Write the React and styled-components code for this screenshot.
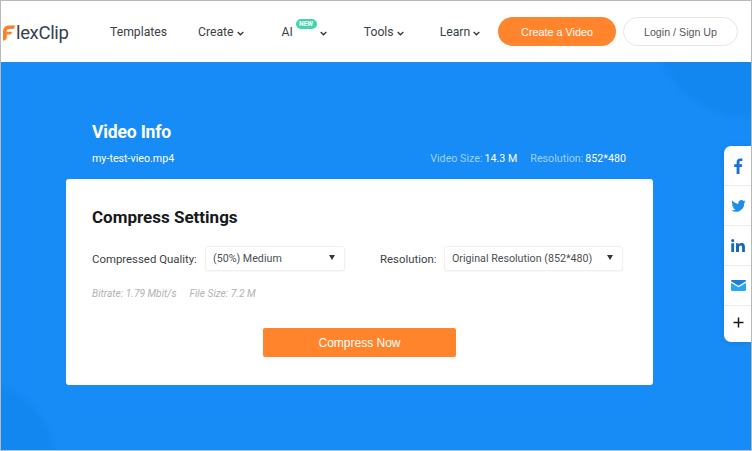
import React from "react";
import styled, { createGlobalStyle } from "styled-components";

const Global = createGlobalStyle`
  html, body { margin: 0; padding: 0; background: #fff; }
  body { font-family: Roboto, "Liberation Sans", sans-serif; }
  * { box-sizing: border-box; }
`;
const Frame = styled.div`
  width: 752px; height: 451px; border: 1px solid #b9b9b9; border-bottom-color: #a9c6de;
  display: flex; flex-direction: column; overflow: hidden; position: relative;
`;
const Header = styled.header`
  height: 61px; flex: none; background: #fff; display: flex; align-items: center; padding: 0 13px 0 0;
`;
const Logo = styled.div`
  width: 109px; flex: none; display: flex; align-items: center; color: #36414c;
  font-size: 18.5px; letter-spacing: -0.35px; padding: 2px 0 0 1px;
  svg { flex: none; }
`;
const Nav = styled.nav`display: flex; align-items: center; flex: 1; height: 100%; padding-top: 1px;`;
const NavItem = styled.span`
  position: relative; display: flex; align-items: center; font-size: 12.2px; color: #3b3f44;
  margin-right: ${(p) => p.$gap}px; height: 20px;
  svg { margin-left: ${(p) => p.$chev || 3}px; margin-top: 3px; }
`;
const NewBadge = styled.span`
  position: absolute; left: 14px; top: -3px; width: 21px; height: 10px; border-radius: 6px;
  background: #43d5ad; color: #fff; font-size: 6.5px; font-weight: 700; line-height: 10px; text-align: center;
`;
const PillPrimary = styled.button`
  width: 118px; height: 29px; border: 0; border-radius: 15px; background: #ff842c; color: #fff;
  font: 10.8px "Liberation Sans", Arial, sans-serif; margin-right: 7px; flex: none; padding: 0;
`;
const PillOutline = styled.button`
  width: 115px; height: 29px; border: 1px solid #e6e6e6; border-radius: 15px; background: #fff; color: #55595e;
  font: 10.7px "Liberation Sans", Arial, sans-serif; flex: none; padding: 0;
`;
const Main = styled.main`
  flex: 1; background: #178bf6; position: relative; overflow: hidden; padding: 60px 0 0 65px;
  &::before { content: ""; position: absolute; right: -96px; top: -139px; width: 194px; height: 194px; border-radius: 50%; background: #1387f0; filter: blur(2px); }
  &::after { content: ""; position: absolute; left: -116px; bottom: -100px; width: 170px; height: 170px; border-radius: 50%; background: #1387f0; filter: blur(2px); }
`;
const Content = styled.div`width: 587px; position: relative; z-index: 1;`;
const InfoHead = styled.div`padding: 0 27px 0 26px; color: #fff;`;
const InfoTitle = styled.h1`margin: 0; font-size: 17.6px; line-height: 20px; font-weight: 700; letter-spacing: -0.2px;`;
const InfoRow = styled.div`display: flex; justify-content: space-between; margin-top: 9px; height: 17px; font-size: 10.7px; line-height: 16px;`;
const Stats = styled.div`display: flex; gap: 13px;`;
const Stat = styled.span`color: #9fd0fb; b { color: #fff; font-weight: 400; margin-left: 2px; }`;
const Card = styled.section`
  margin-top: 11px; height: 206px; background: #fff; border-radius: 3px; padding: 28px 26px 0;
`;
const CardTitle = styled.h2`margin: 0; font-size: 17px; line-height: 20px; font-weight: 700; color: #16191c;`;
const Row = styled.div`display: flex; align-items: center; margin-top: 19px;`;
const Label = styled.label`font-size: 11.4px; color: #3d4146; white-space: nowrap; width: ${(p) => p.$w}px; flex: none;`;
const Select = styled.div`
  width: ${(p) => p.$w}px; height: 25px; border: 1px solid #f0f0f0; border-radius: 3px; background: #fff;
  display: flex; align-items: center; justify-content: space-between; padding: 0 8px 0 7px;
  font-size: 10.7px; color: #4b4f54; margin-right: ${(p) => p.$mr || 0}px; flex: none;
  box-shadow: 0 1px 2px rgba(0,0,0,.04);
`;
const Caret = styled.i`
  width: 0; height: 0; border-left: 3px solid transparent; border-right: 3px solid transparent; border-top: 5px solid #33373b; margin: 0 1px 3px 0;
`;
const Hints = styled.div`display: flex; gap: 13px; margin-top: 16px; font-size: 10.2px; line-height: 14px; font-style: italic; color: #b0b2b4;`;
const Submit = styled.button`
  display: block; margin: 27px auto 0 171px; width: 193px; height: 29px; border: 0; border-radius: 2px; background: #ff842c; color: #fff;
  font: 12px "Liberation Sans", Arial, sans-serif; padding: 0;
`;
const Share = styled.aside`
  position: absolute; right: -1px; top: 145px; width: 28px; background: #fff; border-radius: 7px 0 0 7px; z-index: 2;
  box-shadow: 0 1px 6px rgba(0,0,0,.08); display: flex; flex-direction: column;
`;
const ShareItem = styled.div`
  height: 40px; display: flex; align-items: center; justify-content: center;
  border-bottom: 1px solid #ececec;
`;
const ShareMore = styled.div`
  height: 36px; padding-bottom: 4px; display: flex; align-items: center; justify-content: center;
`;

const Chevron = () => (
  <svg width="7" height="5" viewBox="0 0 7 5" fill="none"><path d="M.7 1l2.800 2.800L6.300 1" stroke="#33373b" strokeWidth="1.300" /></svg>
);

export default function App() {
  return (
    <Frame>
      <Global />
      <Header>
        <Logo>
          <svg width="14" height="18" viewBox="0 0 14 17">
            <path d="M1 8C1 3 3 1 7 1h6.500l-2 3.400H7C5.300 4.400 4.700 5.300 4.700 7v.3h5.800L8.700 10H4.700v4.500L1 16.500z" fill="#f9822b" />
          </svg>
          <span>lexClip</span>
        </Logo>
        <Nav>
          <NavItem $gap={31}>Templates</NavItem>
          <NavItem $gap={38}>Create<Chevron /></NavItem>
          <NavItem $gap={37} $chev={27}>AI<NewBadge>NEW</NewBadge><Chevron /></NavItem>
          <NavItem $gap={36}>Tools<Chevron /></NavItem>
          <NavItem $gap={0}>Learn<Chevron /></NavItem>
        </Nav>
        <PillPrimary>Create a Video</PillPrimary>
        <PillOutline>Login / Sign Up</PillOutline>
      </Header>
      <Main>
        <Content>
          <InfoHead>
            <InfoTitle>Video Info</InfoTitle>
            <InfoRow>
              <span>my-test-vieo.mp4</span>
              <Stats>
                <Stat>Video Size:<b>14.3 M</b></Stat>
                <Stat>Resolution:<b>852*480</b></Stat>
              </Stats>
            </InfoRow>
          </InfoHead>
          <Card>
            <CardTitle>Compress Settings</CardTitle>
            <Row>
              <Label $w={113}>Compressed Quality:</Label>
              <Select $w={140} $mr={35}>(50%) Medium<Caret /></Select>
              <Label $w={64}>Resolution:</Label>
              <Select $w={179}>Original Resolution (852*480)<Caret /></Select>
            </Row>
            <Hints>
              <span>Bitrate: 1.79 Mbit/s</span>
              <span>File Size: 7.2 M</span>
            </Hints>
            <Submit>Compress Now</Submit>
          </Card>
        </Content>
      </Main>
      <Share>
        <ShareItem>
          <svg width="10" height="16" viewBox="0 0 10 16"><path d="M6.500 16V9h2.400l.4-2.800H6.500V4.500c0-.8.300-1.400 1.400-1.400h1.500V.6C9.100.5 8.300.4 7.300.4 5.100.4 3.600 1.700 3.600 4.200v2H1.200V9h2.400v7z" fill="#1b6fd8" /></svg>
        </ShareItem>
        <ShareItem>
          <svg width="15" height="12" viewBox="0 0 24 20"><path d="M24 2.400c-.9.400-1.800.7-2.800.8 1-.6 1.800-1.600 2.200-2.700-1 .6-2 1-3.100 1.200A4.900 4.900 0 0 0 11.900 6.200C7.800 6 4.200 4 1.700.9c-.4.700-.7 1.600-.7 2.500 0 1.700.9 3.200 2.200 4.100-.8 0-1.600-.2-2.200-.6v.1c0 2.400 1.700 4.400 3.900 4.800-.7.200-1.500.2-2.200.1.600 2 2.400 3.400 4.600 3.400A9.900 9.900 0 0 1 0 17.300 13.900 13.900 0 0 0 21.500 5c1-.7 1.900-1.600 2.500-2.600z" fill="#1e8fe8" /></svg>
        </ShareItem>
        <ShareItem>
          <svg width="14" height="13" viewBox="0 0 14 13"><path d="M.3 4.300h2.800V13H.3zM1.700 0a1.600 1.600 0 1 1 0 3.200 1.600 1.600 0 0 1 0-3.200zM5 4.300h2.700v1.200c.5-.8 1.400-1.400 2.800-1.400 2.800 0 3.400 1.800 3.400 4.300V13h-2.800V8.800c0-1 0-2.300-1.400-2.300s-1.700 1.100-1.700 2.200V13H5z" fill="#1667b8" /></svg>
        </ShareItem>
        <ShareItem>
          <svg width="15" height="11" viewBox="0 0 15 11"><path d="M0 1.200C0 .5.500 0 1.200 0h12.600c.7 0 1.200.5 1.200 1.200L7.500 5.700z" fill="#1a7fd6" /><path d="M0 2.800l7.500 4.400L15 2.800v7c0 .7-.5 1.200-1.200 1.200H1.200C.5 11 0 10.500 0 9.800z" fill="#2aa6f2" /></svg>
        </ShareItem>
        <ShareMore>
          <svg width="11" height="11" viewBox="0 0 11 11"><path d="M5.500.5v10M.5 5.500h10" stroke="#1a1a1a" strokeWidth="1.500" /></svg>
        </ShareMore>
      </Share>
    </Frame>
  );
}
